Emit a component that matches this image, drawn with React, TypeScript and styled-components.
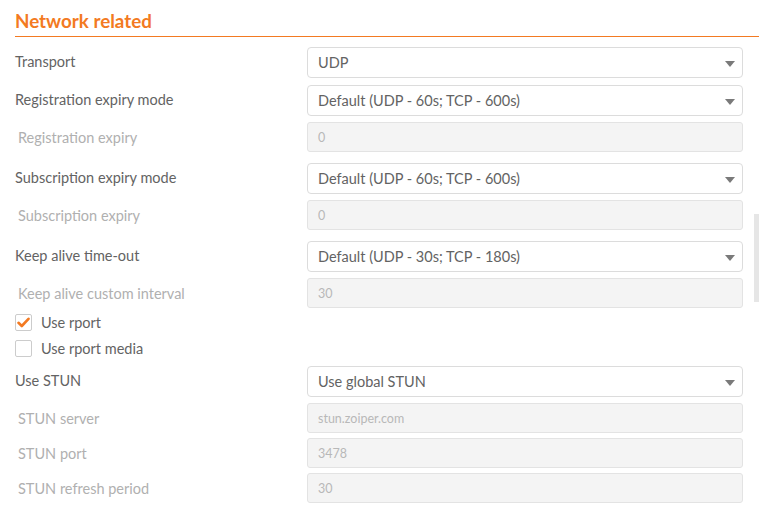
import React from "react";
import styled, { createGlobalStyle } from "styled-components";

const Global = createGlobalStyle`
  html, body { margin: 0; padding: 0; background: #ffffff; }
  body { font-family: Lato, "Open Sans", sans-serif; color: #636363; }
  * { box-sizing: border-box; }
`;

const Page = styled.div`
  position: relative;
  width: 759px;
  height: 509px;
  overflow: hidden;
  padding-left: 15px;
`;

const Heading = styled.h2`
  margin: 0;
  padding-top: 10px;
  height: 37px;
  font-size: 18.8px;
  font-weight: 700;
  color: #f37a22;
  border-bottom: 1px solid #f37a22;
  line-height: 22px;
`;

const Form = styled.div`
  display: flex;
  flex-direction: column;
  padding-top: 10px;
  padding-right: 16px;
`;

const Row = styled.div<{ $h: number; $mb: number }>`
  display: grid;
  grid-template-columns: 292px 1fr;
  align-items: center;
  height: ${(p) => p.$h}px;
  margin-bottom: ${(p) => p.$mb}px;
`;

const Label = styled.div<{ $disabled?: boolean }>`
  font-size: 14.5px;
  margin-top: ${(p) => (p.$disabled ? 1 : -2)}px;
  color: ${(p) => (p.$disabled ? "#b0b0b0" : "#636363")};
  padding-left: ${(p) => (p.$disabled ? 3 : 0)}px;
`;

const Select = styled.div`
  position: relative;
  height: 31px;
  border: 1px solid #dcdcdc;
  border-radius: 4px;
  background: #fff;
  display: flex;
  align-items: center;
  padding-left: 10px;
  font-size: 14.5px;
  color: #636363;
`;

const Caret = styled.span`
  position: absolute;
  right: 7px;
  top: 13px;
  width: 0;
  height: 0;
  border-left: 5px solid transparent;
  border-right: 5px solid transparent;
  border-top: 6px solid #7a7a7a;
`;

const Input = styled.div`
  height: 30px;
  border: 1px solid #e3e3e3;
  border-radius: 3px;
  background: #f4f4f4;
  display: flex;
  align-items: center;
  padding-left: 10px;
  font-size: 12.5px;
  color: #b8b8b8;
`;

const CheckRow = styled.label<{ $mb: number }>`
  display: flex;
  align-items: center;
  gap: 9px;
  height: 16px;
  margin-bottom: ${(p) => p.$mb}px;
  font-size: 14.5px;
  color: #636363;
`;

const Box = styled.span`
  width: 17px;
  height: 17px;
  border: 1px solid #cccccc;
  border-radius: 2px;
  background: #fff;
  display: flex;
  align-items: center;
  justify-content: center;
`;

const Scrollbar = styled.div`
  position: absolute;
  right: 0;
  top: 214px;
  width: 5px;
  height: 88px;
  background: #e6e6e6;
`;

function SelectRow({ label, value, mb }: { label: string; value: string; mb: number }) {
  return (
    <Row $h={31} $mb={mb}>
      <Label>{label}</Label>
      <Select>
        {value}
        <Caret />
      </Select>
    </Row>
  );
}

function InputRow({ label, value, mb }: { label: string; value: string; mb: number }) {
  return (
    <Row $h={30} $mb={mb}>
      <Label $disabled>{label}</Label>
      <Input>{value}</Input>
    </Row>
  );
}

function Check({ label, checked, mb }: { label: string; checked: boolean; mb: number }) {
  return (
    <CheckRow $mb={mb}>
      <Box>
        {checked && (
          <svg width="13" height="11" viewBox="0 0 13 11">
            <path d="M1.5 5.8 L4.8 9 L11.5 1.8" fill="none" stroke="#f37a22" strokeWidth="2.6" strokeLinecap="round" strokeLinejoin="round" />
          </svg>
        )}
      </Box>
      {label}
    </CheckRow>
  );
}

export default function App() {
  return (
    <>
      <Global />
      <Page>
        <Heading>Network related</Heading>
        <Form>
          <SelectRow label="Transport" value="UDP" mb={7} />
          <SelectRow label="Registration expiry mode" value="Default (UDP - 60s; TCP - 600s)" mb={6} />
          <InputRow label="Registration expiry" value="0" mb={11} />
          <SelectRow label="Subscription expiry mode" value="Default (UDP - 60s; TCP - 600s)" mb={6} />
          <InputRow label="Subscription expiry" value="0" mb={11} />
          <SelectRow label="Keep alive time-out" value="Default (UDP - 30s; TCP - 180s)" mb={6} />
          <InputRow label="Keep alive custom interval" value="30" mb={6} />
          <Check label="Use rport" checked mb={10} />
          <Check label="Use rport media" checked={false} mb={10} />
          <SelectRow label="Use STUN" value="Use global STUN" mb={6} />
          <InputRow label="STUN server" value="stun.zoiper.com" mb={5} />
          <InputRow label="STUN port" value="3478" mb={5} />
          <InputRow label="STUN refresh period" value="30" mb={0} />
        </Form>
        <Scrollbar />
      </Page>
    </>
  );
}
